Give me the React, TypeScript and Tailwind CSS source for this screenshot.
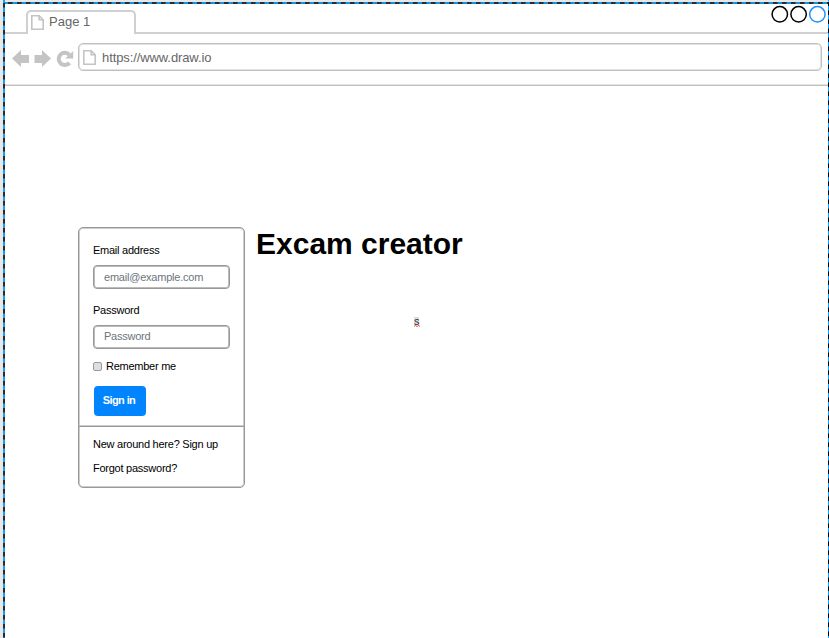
import React from "react";

function PageIcon() {
  return (
    <svg className="block h-[15px] w-[13px] shrink-0" viewBox="0 0 13 15" fill="none" stroke="#c4c4c4" strokeWidth="1.6">
      <path d="M0.8 0.8H8.2L12.2 4.8V14.2H0.8Z" />
      <path d="M8.2 0.8V4.8H12.2" />
    </svg>
  );
}

function SelectionFrame() {
  return (
    <svg className="pointer-events-none absolute inset-0 h-[638px] w-[829px]" viewBox="0 0 829 638" fill="none">
      <path d="M3 3H829" stroke="#2b2b2b" strokeWidth="2" />
      <path d="M3.5 3H829" stroke="#1296e0" strokeWidth="2" strokeDasharray="4.5 4.5" />
      <path d="M4 2V638" stroke="#2b2b2b" strokeWidth="2" />
      <path d="M4 -1.5V638" stroke="#1a9df0" strokeWidth="2" strokeDasharray="4.5 4.5" />
      <path d="M828.5 2V638" stroke="#000" />
      <path d="M828.5 -3V638" stroke="#12a0ff" strokeDasharray="4.5 4.5" />
    </svg>
  );
}

function WindowButtons() {
  return (
    <svg className="block h-[20px] w-[58px]" viewBox="0 0 58 20" fill="none" strokeWidth="1.5">
      <circle cx="9.8" cy="10.3" r="7.7" stroke="#000" />
      <circle cx="28.6" cy="10.3" r="7.7" stroke="#000" />
      <circle cx="47.4" cy="10.3" r="7.7" stroke="#1e90ff" />
    </svg>
  );
}

function TabBar() {
  return (
    <div className="flex h-[30px] shrink-0">
      <div className="w-[21px] border-b-2 border-[#d0d0d0]" />
      <div className="mt-[6px] flex w-[110px] rounded-t-[5px] border-2 border-b-0 border-[#d0d0d0] pl-[3px] pt-[3px]">
        <PageIcon />
        <span className="ml-[5px] -mt-[1px] text-[13px] leading-[16px] text-[#666]">Page 1</span>
      </div>
      <div className="flex flex-1 justify-end border-b-2 border-[#d0d0d0] pr-[1px]">
        <WindowButtons />
      </div>
    </div>
  );
}

function AddressBar() {
  return (
    <div className="flex h-[52px] shrink-0 border-b border-[#c0c0c0] pl-[7px] pr-[7px] pt-[9px] shadow-[0_-1px_0_#e4e4e4_inset]">
      <svg className="h-[28px] w-[66px] shrink-0" viewBox="0 0 66 28" fill="#c4c4c4">
        <path d="M0 15.5L9 7V12H17V20H9V24Z" />
        <path d="M39 15.5L30 7V12H22.5V20H30V24Z" />
        <path d="M57.3 11.8A6.1 6.1 0 1 0 57.5 19.9" fill="none" stroke="#c4c4c4" strokeWidth="4" />
        <path d="M61.2 8V15.6H53.2Z" />
      </svg>
      <div className="flex h-[28px] flex-1 rounded-[5px] border border-[#c0c0c0] pl-[4px] pt-[6px] shadow-[0_0_0_1px_#e2e2e2_inset]">
        <PageIcon />
        <span className="ml-[6px] text-[13px] leading-[16px] tracking-[-0.1px] text-[#666]">https://www.draw.io</span>
      </div>
    </div>
  );
}

function Field({ label, hint, hintClass }: { label: string; hint: string; hintClass: string }) {
  return (
    <label className="block h-[60px]">
      <span className="block h-[22px] leading-[14px]">{label}</span>
      <span className={`block h-[24px] w-[137px] rounded-[4px] border border-[#999] pl-[10px] text-[#6c757d] shadow-[0_0_0_1px_#bbb_inset] ${hintClass}`}>{hint}</span>
    </label>
  );
}

function SignIn() {
  return (
    <section className="h-[261px] w-[167px] shrink-0 rounded-[5px] border border-[#999] text-[11px] tracking-[-0.25px] text-black shadow-[0_0_0_1px_#ccc_inset]">
      <div className="h-[199px] border-b border-[#999] pl-[14px] pt-[15px] shadow-[0_-1px_0_#ccc_inset]">
        <Field label="Email address" hint="email@example.com" hintClass="leading-[22px] tracking-[-0.22px]" />
        <Field label="Password" hint="Password" hintClass="leading-[20px]" />
        <div className="-mt-[4px] flex h-[27px] items-start leading-[14px]">
          <span className="mt-[3px] mr-1 h-[9px] w-[9px] rounded-[2px] border border-[#999] bg-[#dedede]" />
          Remember me
        </div>
        <button className="ml-px block h-[30px] w-[52px] rounded-[4px] bg-[#0085ff] pb-[2px] pr-[2px] text-[11px] font-bold tracking-[-0.6px] text-white">Sign in</button>
      </div>
      <div className="pl-[14px] pt-[10px] leading-[14px]">
        <p>New around here? Sign up</p>
        <p className="mt-[10px]">Forgot password?</p>
      </div>
    </section>
  );
}

export default function App() {
  return (
    <div className="relative flex h-[638px] w-[829px] flex-col overflow-hidden bg-white font-['Liberation_Sans',Arial,sans-serif]">
      <div className="flex h-full flex-col border-l-[3px] border-t-2 border-[#e8e8e8] pl-[2px] pt-[2px]">
        <TabBar />
        <AddressBar />
        <main className="flex flex-1 pl-[73px] pt-[141px]">
          <SignIn />
          <div className="ml-[11px] w-[320px]">
            <h1 className="pt-px text-[30px] leading-[32px] font-bold text-black">Excam creator</h1>
            <p className="ml-[158px] mt-[57px] flex w-[7px] flex-col text-[11px] leading-[8px] text-[#333]">
              <span className="w-[5px] bg-[#dcdcdc]">s</span>
              <svg className="h-[2px] w-[6px]" viewBox="0 0 6 2" fill="none" stroke="#ff4040">
                <path d="M0 1.5L1.5 0.5L3 1.5L4.5 0.5L6 1.5" />
              </svg>
            </p>
          </div>
        </main>
      </div>
      <SelectionFrame />
    </div>
  );
}
